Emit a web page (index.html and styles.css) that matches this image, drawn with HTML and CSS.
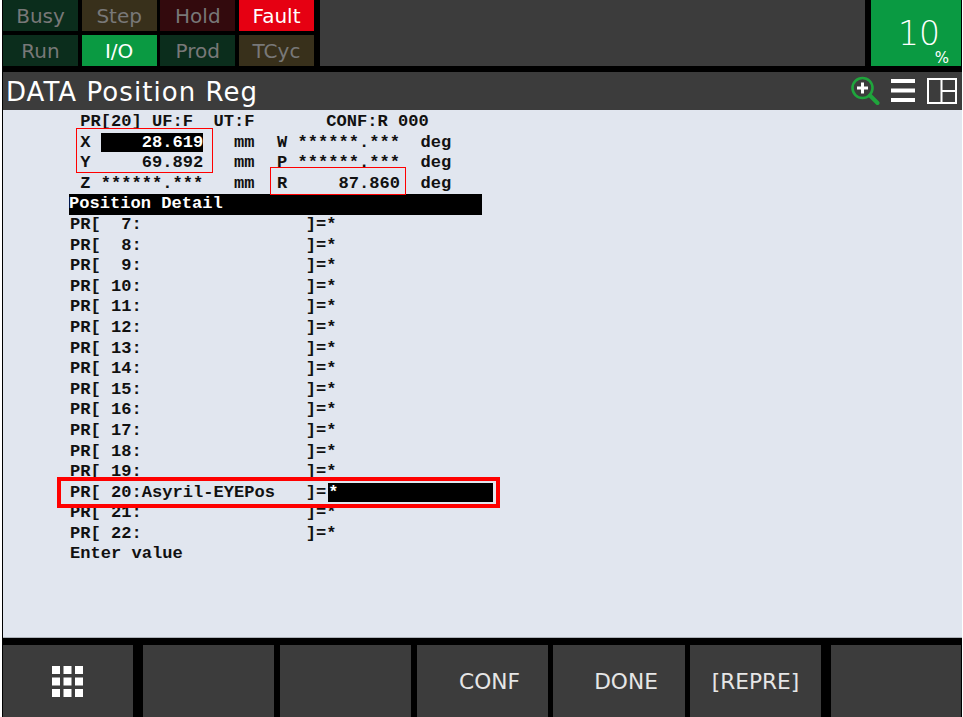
FILE: index.html
```html
<!DOCTYPE html>
<html lang="en">
<head>
<meta charset="utf-8">
<title>DATA Position Reg</title>
<link rel="stylesheet" href="styles.css">
</head>
<body>
<div class="app">
  <header class="top">
    <div class="status">
      <div class="lamp lamp-green">Busy</div>
      <div class="lamp lamp-amber">Step</div>
      <div class="lamp lamp-red">Hold</div>
      <div class="lamp lamp-fault">Fault</div>
      <div class="lamp lamp-green">Run</div>
      <div class="lamp lamp-on">I/O</div>
      <div class="lamp lamp-green">Prod</div>
      <div class="lamp lamp-amber">TCyc</div>
    </div>
    <div class="message"></div>
    <div class="override"><span class="num">10</span><span class="pct">%</span></div>
  </header>
  <div class="title">
    <h1>DATA Position Reg</h1>
    <div class="tools">
      <svg class="zoom" width="30" height="30" viewBox="0 0 30 30"><circle cx="12.5" cy="12" r="10" fill="none" stroke="#1fa53c" stroke-width="2.6"/><path d="M20 19.5L27.5 27" stroke="#1fa53c" stroke-width="4" stroke-linecap="round"/><path d="M7 12H18M12.5 6.5V17.5" stroke="#fff" stroke-width="3"/></svg>
      <svg class="menu" width="24" height="24" viewBox="0 0 24 24"><path d="M0 2H24M0 11.5H24M0 21H24" stroke="#fff" stroke-width="4"/></svg>
      <svg class="split" width="30" height="26" viewBox="0 0 30 26"><path d="M1 1H29V25H1ZM14.500 1V25M14.500 13H29" fill="none" stroke="#fff" stroke-width="2"/></svg>
    </div>
  </div>
  <main class="screen">
    <div class="listing">
      <div class="row"> PR[20] UF:F  UT:F       CONF:R 000</div>
      <div class="row"> X <span class="inv">    28.619</span>   mm  <span class="far">W ******.***  deg</span></div>
      <div class="row"> Y     69.892   mm  <span class="far">P ******.***  deg</span></div>
      <div class="row"> Z ******.***   mm  <span class="far">R     87.860  deg</span></div>
      <div class="row"><span class="inv bar">Position Detail</span></div>
      <div class="row">PR[  7:                ]=*</div>
      <div class="row">PR[  8:                ]=*</div>
      <div class="row">PR[  9:                ]=*</div>
      <div class="row">PR[ 10:                ]=*</div>
      <div class="row">PR[ 11:                ]=*</div>
      <div class="row">PR[ 12:                ]=*</div>
      <div class="row">PR[ 13:                ]=*</div>
      <div class="row">PR[ 14:                ]=*</div>
      <div class="row">PR[ 15:                ]=*</div>
      <div class="row">PR[ 16:                ]=*</div>
      <div class="row">PR[ 17:                ]=*</div>
      <div class="row">PR[ 18:                ]=*</div>
      <div class="row">PR[ 19:                ]=*</div>
      <div class="row">PR[ 20:Asyril-EYEPos   ]=<span class="inv cursor">*               </span></div>
      <div class="row">PR[ 21:                ]=*</div>
      <div class="row">PR[ 22:                ]=*</div>
      <div class="row">Enter value</div>
    </div>
    <div class="mark mark-xy"></div>
    <div class="mark mark-r"></div>
    <div class="mark mark-row"></div>
  </main>
  <footer class="keys">
    <div class="key key-menu"><svg width="31" height="31" viewBox="0 0 31 31"><path d="M0 0h8v8H0zM11.500 0h8v8h-8zM23 0h8v8h-8zM0 11.500h8v8H0zM11.500 11.500h8v8h-8zM23 11.500h8v8h-8zM0 23h8v8H0zM11.500 23h8v8h-8zM23 23h8v8h-8z" fill="#fff"/></svg></div>
    <div class="key"></div>
    <div class="key"></div>
    <div class="key key-shift">CONF</div>
    <div class="key key-shift">DONE</div>
    <div class="key">[REPRE]</div>
    <div class="key"></div>
  </footer>
</div>
</body>
</html>
```
FILE: styles.css
```css
* { box-sizing: border-box; }
html, body { margin: 0; height: 100%; background: #fff; }
body { width: 963px; height: 717px; overflow: hidden; font-family: "DejaVu Sans", sans-serif; }
.app { margin: 0 1px 0 2px; height: 717px; background: #000; display: flex; flex-direction: column; padding-left: 1px; }

.top { height: 66px; display: flex; }
.status { width: 311px; display: grid; grid-template-columns: repeat(4, 75px); grid-template-rows: 31px 31px; column-gap: 3.670px; row-gap: 4px; }
.lamp { display: flex; align-items: center; justify-content: center; font-size: 20px; color: #787878; }
.lamp-green { background: #0b2d1c; }
.lamp-amber { background: #38301b; }
.lamp-red { background: #330a0d; }
.lamp-fault { background: #e60012; color: #fff; }
.lamp-on { background: #0a9a42; color: #fff; }
.message { width: 545px; margin-left: 6px; background: #3c3c3c; }
.override { width: 90px; margin-left: 6px; background: #0a9a42; color: #fff; position: relative; }
.num { position: absolute; left: 27px; top: 17px; font-size: 33px; font-weight: 200; line-height: 34px; }
.pct { position: absolute; right: 12px; bottom: 1px; font-size: 15px; line-height: 14px; }

.title { margin-top: 6px; height: 38px; background: #3c3c3c; display: flex; align-items: center; justify-content: space-between; padding: 0 5px 0 3px; }
.title h1 { margin: 0; padding-top: 3px; font-size: 26px; font-weight: 400; letter-spacing: 1.060px; color: #fff; line-height: 35px; }
.tools { display: flex; align-items: center; }
.zoom { margin-right: 11px; }
.menu { margin-right: 12px; }

.screen { position: relative; height: 528px; background: #e1e6ef; border-bottom: 1px solid #aeb3ba; }
.listing { padding: 2px 0 0 67px; font: 700 17.080px/20.600px "Liberation Mono", monospace; color: #111; }
.row { height: 20.600px; white-space: pre; }
.far { margin-left: 2px; }
.inv { background: #000; color: #fff; }
.bar { display: inline-block; width: 413px; margin-left: -1px; }
.cursor { margin-left: 2px; padding-right: 1px; }
.mark { position: absolute; border: 1px solid #f00; }
.mark-xy { left: 73px; top: 18px; width: 137px; height: 45px; }
.mark-r { left: 267px; top: 57px; width: 136px; height: 28px; }
.mark-row { left: 54px; top: 367px; width: 443px; height: 31px; border-width: 4px; }

.keys { margin-top: 7px; height: 72px; display: flex; column-gap: 5px; }
.key { width: 131px; background: #3c3c3c; color: #e6e6e6; font-size: 21.700px; font-weight: 400; display: flex; align-items: center; justify-content: center; }
.key:first-child, .key:last-child { width: 130px; }
.key:nth-child(2), .key:last-child { margin-left: 5px; }
.key:nth-child(3), .key:nth-child(4) { margin-left: 1px; }
.key:nth-child(5) { width: 132px; }
.key-menu { padding-right: 1px; }
.key-shift { padding-left: 14px; }
```
